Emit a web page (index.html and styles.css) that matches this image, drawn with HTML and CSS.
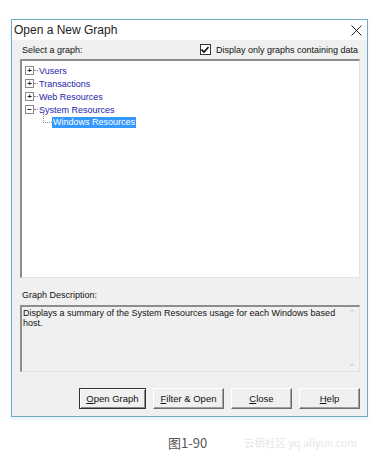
FILE: index.html
```html
<!DOCTYPE html>
<html>

<head>
    <meta charset="UTF-8">
    <meta name="viewport" content="width=device-width, initial-scale=1.0">
    <title>Open a New Graph</title>
    <link rel="stylesheet" href="styles.css">
</head>

<body>
    <div class="dialog">
        <div class="titlebar">
            <span class="title">Open a New Graph</span>
            <svg class="close-x" width="11" height="11" viewBox="0 0 11 11">
                <path d="M0.5 0.5 L10.5 10.5 M10.5 0.5 L0.5 10.5" stroke="#222" stroke-width="1" fill="none" />
            </svg>
        </div>

        <div class="panel">
            <div class="select-row">
                <span>Select a graph:</span>
                <label class="check">
                    <span class="checkbox">
                        <svg width="8" height="8" viewBox="0 0 8 8">
                            <path d="M0.5 3.5 L3 6 L7.5 1" stroke="#111" stroke-width="1.6" fill="none" />
                        </svg>
                    </span>
                    Display only graphs containing data
                </label>
            </div>

            <!-- graph tree -->
            <div class="tree">
                <div class="node"><span class="pm">+</span><span class="dash"></span><span class="name">Vusers</span></div>
                <div class="node"><span class="pm">+</span><span class="dash"></span><span class="name">Transactions</span></div>
                <div class="node"><span class="pm">+</span><span class="dash"></span><span class="name">Web Resources</span></div>
                <div class="node"><span class="pm">&minus;</span><span class="dash"></span><span class="name">System Resources</span></div>
                <div class="node child"><span class="elbow"></span><span class="name selected">Windows Resources</span></div>
            </div>

            <div class="desc-label">Graph Description:</div>
            <div class="desc">
                <p>Displays a summary of the System Resources usage for each Windows based host.</p>
                <div class="scroll">
                    <span>&#8963;</span>
                    <span>&#8964;</span>
                </div>
            </div>

            <div class="buttons">
                <button class="btn default"><u>O</u>pen Graph</button>
                <button class="btn wide"><u>F</u>ilter &amp; Open</button>
                <button class="btn"><u>C</u>lose</button>
                <button class="btn"><u>H</u>elp</button>
            </div>
        </div>
    </div>

    <div class="caption">
        <span class="fig">图1-90</span>
        <span class="mark">云栖社区 yq.aliyun.com</span>
    </div>
</body>

</html>
```

FILE: styles.css
```css
body {
    margin: 0;
    padding: 0;
    background: #fff;
    font-family: "Liberation Sans", Arial, sans-serif;
    color: #111;
    width: 377px;
    height: 459px;
    overflow: hidden;
}

.dialog {
    margin: 19px 0 0 11px;
    width: 355px;
    border: 1px solid #72a9c9;
    background: #f0f0f0;
    box-shadow: 0 2px 3px rgba(170, 215, 230, 0.35);
}

.titlebar {
    height: 20px;
    background: #fff;
    display: flex;
    align-items: center;
    justify-content: space-between;
    padding: 0 5px 0 2px;
}

.title {
    font-size: 12px;
    color: #222;
}

.panel {
    padding: 3px 7px 7px 8px;
    font-size: 9px;
}

.select-row {
    display: flex;
    justify-content: space-between;
    align-items: center;
    height: 13px;
    padding: 0 2px 0 2px;
}

.check {
    display: flex;
    align-items: center;
    gap: 5px;
}

.checkbox {
    width: 9px;
    height: 9px;
    border: 1px solid #333;
    background: #fff;
    display: flex;
    align-items: center;
    justify-content: center;
}

.tree {
    margin-top: 3px;
    height: 213px;
    background: #fff;
    border-top: 2px solid #8d8d8d;
    border-left: 2px solid #8d8d8d;
    border-right: 1px solid #e3e3e3;
    border-bottom: 1px solid #e3e3e3;
    padding: 3px 0 0 3px;
}

.node {
    display: flex;
    align-items: center;
    height: 13px;
}

.pm {
    width: 7px;
    height: 7px;
    border: 1px solid #8a8a8a;
    font-size: 8px;
    line-height: 7px;
    text-align: center;
    color: #222;
    font-weight: bold;
}

.dash {
    width: 4px;
    border-top: 1px dotted #8a8a8a;
}

.name {
    color: #2323a8;
    padding: 0 1px;
}

.child {
    padding-left: 18px;
}

.elbow {
    width: 8px;
    height: 9px;
    margin-top: -9px;
    border-left: 1px dotted #8a8a8a;
    border-bottom: 1px dotted #8a8a8a;
}

.selected {
    background: #3399ff;
    color: #fff;
    line-height: 11px;
}

.desc-label {
    margin-top: 12px;
    padding-left: 2px;
    height: 13px;
}

.desc {
    margin-top: 2px;
    height: 64px;
    border-top: 2px solid #8d8d8d;
    border-left: 2px solid #8d8d8d;
    border-right: 1px solid #e3e3e3;
    border-bottom: 1px solid #e3e3e3;
    display: flex;
    justify-content: space-between;
}

.desc p {
    margin: 1px 0 0 1px;
    width: 320px;
    line-height: 10px;
}

.scroll {
    width: 14px;
    display: flex;
    flex-direction: column;
    justify-content: space-between;
    align-items: center;
    color: #c4c4c4;
    font-size: 9px;
    padding: 1px 0 3px;
}

.buttons {
    display: flex;
    justify-content: flex-end;
    gap: 7px;
    margin-top: 16px;
    padding-right: 0;
}

.btn {
    font-family: "Liberation Sans", Arial, sans-serif;
    font-size: 9.5px;
    height: 21px;
    background: #f0f0f0;
    border: 1px solid #fff;
    border-right-color: #6b6b6b;
    border-bottom-color: #6b6b6b;
    box-shadow: inset -1px -1px 0 #a0a0a0;
    color: #111;
    padding: 0;
    width: 61px;
}

.btn.default {
    width: 67px;
    border: 1px solid #333;
    box-shadow: inset 1px 1px 0 #fff, inset -1px -1px 0 #888;
}

.btn.wide {
    width: 71px;
}

.caption {
    position: relative;
    margin-top: 16px;
    height: 20px;
}

.fig {
    position: absolute;
    left: 168px;
    top: 0;
    font-family: "Noto Sans CJK SC", "Noto Sans", sans-serif;
    font-size: 13px;
    color: #555;
}

.mark {
    position: absolute;
    left: 244px;
    top: 2px;
    font-family: "Noto Sans CJK SC", "Noto Sans", sans-serif;
    font-size: 10.5px;
    color: #e6e6e6;
}
```
